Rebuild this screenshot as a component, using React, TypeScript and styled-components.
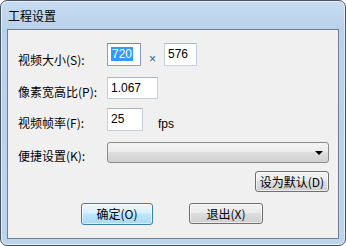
import React from "react";
import styled, { createGlobalStyle } from "styled-components";

const Global = createGlobalStyle`
  html, body { margin: 0; padding: 0; background: #ffffff; }
  body { font-family: "Liberation Sans", "Noto Sans CJK SC", sans-serif; font-size: 12px; color: #000; }
`;

const Window = styled.div`
  box-sizing: border-box;
  width: 346px;
  height: 246px;
  border: 1px solid #4a5666;
  border-radius: 7px;
  background: linear-gradient(180deg, #c7dcf1 0px, #b9d1ea 28px, #bcd4ec 100%);
  box-shadow: inset 0 0 0 1px rgba(255, 255, 255, 0.55);
  display: flex;
  flex-direction: column;
  overflow: hidden;
`;

const TitleBar = styled.div`
  height: 28px;
  display: flex;
  align-items: center;
  padding-left: 7px;
  flex-shrink: 0;
`;

const Title = styled.span`
  font-family: "Noto Sans CJK SC", sans-serif;
  font-size: 12px;
  line-height: 14px;
  color: #000;
  margin-top: 2px;
`;

const Client = styled.div`
  box-sizing: border-box;
  margin: 0 6px 0 6px;
  height: 210px;
  border: 1px solid #6f7e91;
  background: #f0f0f0;
  display: flex;
  flex-direction: column;
  padding-left: 10px;
`;

const Row = styled.div<{ $mt: number; $h: number }>`
  display: flex;
  align-items: flex-start;
  height: ${(p) => p.$h}px;
  margin-top: ${(p) => p.$mt}px;
`;

const Label = styled.div<{ $dy: number }>`
  width: 89px;
  flex-shrink: 0;
  font-family: "Noto Sans CJK SC", sans-serif;
  font-size: 12px;
  line-height: 14px;
  padding-top: ${(p) => p.$dy}px;
  white-space: nowrap;
`;

const TextBox = styled.div<{ $w: number; $h: number; $focus?: boolean }>`
  box-sizing: border-box;
  width: ${(p) => p.$w}px;
  height: ${(p) => p.$h}px;
  background: #fff;
  border: 1px solid ${(p) => (p.$focus ? "#7da2ce" : "#c5d0dc")};
  border-top-color: ${(p) => (p.$focus ? "#5d8ec7" : "#abb5c2")};
  padding: 3px 0 0 3px;
  font-family: "Liberation Sans", sans-serif;
  font-size: 12px;
  line-height: 14px;
  flex-shrink: 0;
`;

const Selected = styled.span`
  background: #3399ff;
  color: #fff;
  padding: 0 1px;
`;

const Times = styled.span`
  width: 23px;
  text-align: center;
  color: #2f5f9a;
  font-family: "Liberation Sans", sans-serif;
  font-size: 12px;
  line-height: 14px;
  padding-top: 9px;
`;

const Unit = styled.span`
  margin-left: 15px;
  font-family: "Liberation Sans", sans-serif;
  font-size: 12px;
  line-height: 14px;
  padding-top: 9px;
`;

const Combo = styled.div`
  box-sizing: border-box;
  width: 222px;
  height: 21px;
  border: 1px solid #8a8a8a;
  border-radius: 3px;
  background: linear-gradient(180deg, #f3f3f3 0%, #ececec 45%, #dedede 50%, #d0d0d0 100%);
  display: flex;
  align-items: center;
  justify-content: flex-end;
  padding-right: 5px;
`;

const Arrow = styled.span`
  width: 0;
  height: 0;
  border-left: 4px solid transparent;
  border-right: 4px solid transparent;
  border-top: 4px solid #000;
`;

const RightBar = styled.div`
  display: flex;
  justify-content: flex-end;
  margin-top: 8px;
  padding-right: 9px;
`;

const Button = styled.div<{ $w: number; $default?: boolean }>`
  box-sizing: border-box;
  width: ${(p) => p.$w}px;
  height: ${(p) => (p.$default ? 22 : 21)}px;
  border: 1px solid ${(p) => (p.$default ? "#3c7fb1" : "#707070")};
  border-radius: 3px;
  background: ${(p) =>
    p.$default
      ? "linear-gradient(180deg, #eaf6fd 0%, #d9f0fc 45%, #bee6fd 50%, #a7d9f5 100%)"
      : "linear-gradient(180deg, #f2f2f2 0%, #ebebeb 45%, #dddddd 50%, #cfcfcf 100%)"};
  box-shadow: inset 0 0 0 1px rgba(255, 255, 255, 0.6);
  display: flex;
  align-items: center;
  justify-content: center;
  font-family: "Noto Sans CJK SC", sans-serif;
  font-size: 12px;
  line-height: 14px;
`;

const BottomBar = styled.div`
  display: flex;
  margin-top: 11px;
  padding-left: 63px;
  gap: 36px;
`;

export default function App() {
  return (
    <>
      <Global />
      <Window>
        <TitleBar>
          <Title>工程设置</Title>
        </TitleBar>
        <Client>
          <Row $mt={13} $h={22}>
            <Label $dy={10}>视频大小(S):</Label>
            <TextBox $w={34} $h={23} $focus>
              <Selected>720</Selected>
            </TextBox>
            <Times>×</Times>
            <TextBox $w={33} $h={23}>576</TextBox>
          </Row>
          <Row $mt={12} $h={21}>
            <Label $dy={8}>像素宽高比(P):</Label>
            <TextBox $w={51} $h={22}>1.067</TextBox>
          </Row>
          <Row $mt={10} $h={22}>
            <Label $dy={8}>视频帧率(F):</Label>
            <TextBox $w={36} $h={23}>25</TextBox>
            <Unit>fps</Unit>
          </Row>
          <Row $mt={12} $h={21}>
            <Label $dy={7}>便捷设置(K):</Label>
            <Combo>
              <Arrow />
            </Combo>
          </Row>
          <RightBar>
            <Button $w={74}>设为默认(D)</Button>
          </RightBar>
          <BottomBar>
            <Button $w={72} $default>确定(O)</Button>
            <Button $w={74}>退出(X)</Button>
          </BottomBar>
        </Client>
      </Window>
    </>
  );
}
